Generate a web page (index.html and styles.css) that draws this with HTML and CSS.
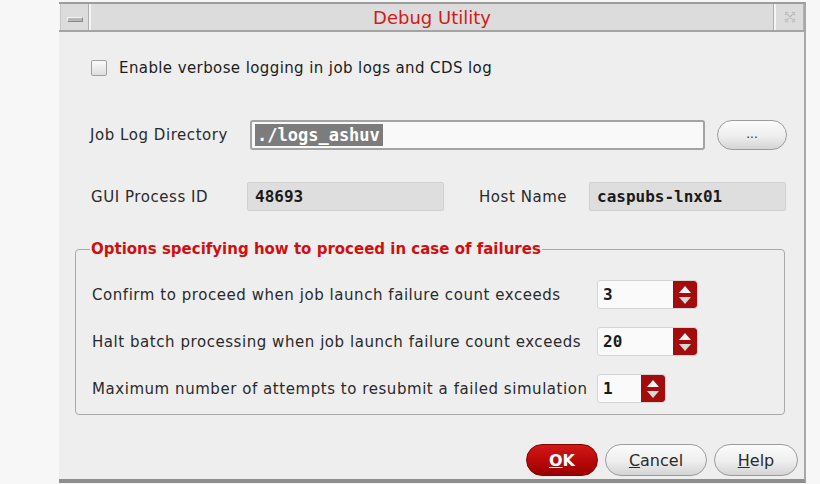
FILE: index.html
```html
<!DOCTYPE html>
<html>
<head>
<meta charset="utf-8">
<link rel="stylesheet" href="styles.css">
</head>
<body>
<div class="window">
  <div class="titlebar">
    <div class="tb-btn tb-min"><span class="min-bar"></span></div>
    <div class="tb-title">Debug Utility</div>
    <div class="tb-btn tb-close">
      <svg width="16" height="16" viewBox="0 0 16 16"><path d="M3 3 L6 6 M6 3 L3 6 M10 3 L13 6 M13 3 L10 6 M3 10 L6 13 M6 10 L3 13 M10 10 L13 13 M13 10 L10 13 M6 6 L10 10 M10 6 L6 10" stroke="#bcbcbc" stroke-width="1.2" fill="none"/></svg>
    </div>
  </div>
  <div class="content">
    <label class="check-row"><span class="checkbox"></span><span class="lbl chk-lbl">Enable verbose logging in job logs and CDS log</span></label>

    <div class="dir-row">
      <span class="lbl dir-lbl">Job Log Directory</span>
      <div class="input dir-input"><span class="sel">./logs_ashuv</span></div>
      <div class="pill browse">...</div>
    </div>

    <div class="info-row">
      <span class="lbl pid-lbl">GUI Process ID</span>
      <div class="ro-field pid">48693</div>
      <span class="lbl host-lbl">Host Name</span>
      <div class="ro-field host">caspubs-lnx01</div>
    </div>

    <fieldset class="group">
      <legend>Options specifying how to proceed in case of failures</legend>
      <div class="opt-row">
        <span class="lbl opt-lbl">Confirm to proceed when job launch failure count exceeds</span>
        <div class="spin"><span class="spin-val">3</span><span class="spin-btn"><i class="up"></i><i class="dn"></i></span></div>
      </div>
      <div class="opt-row">
        <span class="lbl opt-lbl">Halt batch processing when job launch failure count exceeds</span>
        <div class="spin"><span class="spin-val">20</span><span class="spin-btn"><i class="up"></i><i class="dn"></i></span></div>
      </div>
      <div class="opt-row">
        <span class="lbl opt-lbl short">Maximum number of attempts to resubmit a failed simulation</span>
        <div class="spin small"><span class="spin-val">1</span><span class="spin-btn"><i class="up"></i><i class="dn"></i></span></div>
      </div>
    </fieldset>

    <div class="buttons">
      <div class="pill ok"><u>O</u>K</div>
      <div class="pill cancel"><u>C</u>ancel</div>
      <div class="pill help"><u>H</u>elp</div>
    </div>
  </div>
</div>
</body>
</html>
```

FILE: styles.css
```css
html, body {
  margin: 0;
  padding: 0;
  background: #f7f7f7;
  font-family: "DejaVu Sans", sans-serif;
}

.window {
  margin: 2px 0 0 59px;
  width: 745px;
  height: 475px;
  background: #eeeeee;
  border-top: 2px solid #9c9c9c;
  border-right: 2px solid #a8a8a8;
  border-bottom: 4px solid #8e8e8e;
  display: flex;
  flex-direction: column;
}

.titlebar {
  height: 26px;
  display: flex;
  gap: 2px;
  background: #f4f4f4;
  border-bottom: 2px solid #a4a4a4;
}

.tb-btn {
  width: 27px;
  background: #dcdcdc;
  display: flex;
  align-items: center;
  justify-content: center;
  border-right: 1px solid #b0b0b0;
}

.tb-min {
  margin-left: 1px;
  border-left: 1px solid #c8c8c8;
}

.min-bar {
  width: 14px;
  height: 3px;
  background: #b8b8b8;
  border: 1px solid #8a8a8a;
  border-top-color: #f4f4f4;
  border-left-color: #f4f4f4;
  margin-top: 4px;
}

.tb-title {
  flex: 1;
  background: #dcdcdc;
  color: #d21a1a;
  font-family: "DejaVu Sans", sans-serif;
  font-size: 18px;
  text-align: center;
  line-height: 28px;
  border-right: 1px solid #b0b0b0;
}

.tb-close {
  width: 27px;
}

.content {
  flex: 1;
  padding: 27px 0 0 32px;
  display: flex;
  flex-direction: column;
  color: #222;
  font-size: 15px;
}

.check-row {
  display: flex;
  align-items: center;
  height: 18px;
  gap: 12px;
  color: #1c1c1c;
}

.checkbox {
  width: 14px;
  height: 14px;
  border: 1px solid #a0a0a0;
  border-radius: 2px;
  background: linear-gradient(#fafafa, #dedede);
}

.lbl {
  color: #2a2a2a;
  white-space: nowrap;
  letter-spacing: 0.55px;
}

.chk-lbl {
  color: #1c1c1c;
  letter-spacing: 0.4px;
}

.dir-row {
  margin-top: 43px;
  height: 30px;
  display: flex;
  align-items: center;
}

.dir-lbl {
  width: 160px;
  margin-left: -1px;
}

.input {
  height: 26px;
  background: #f9f9f9;
  border: 2px solid #a3a3a3;
  border-radius: 3px;
  box-sizing: content-box;
}

.dir-input {
  width: 448px;
  display: flex;
  align-items: center;
  padding-left: 3px;
}

.sel {
  background: #7c7c7c;
  color: #ffffff;
  font-family: "DejaVu Sans Mono", monospace;
  font-weight: bold;
  font-size: 17px;
  line-height: 22px;
  padding: 0 3px 0 2px;
}

.pill {
  display: flex;
  align-items: center;
  justify-content: center;
  border: 1px solid #9c9c9c;
  border-radius: 15px;
  background: linear-gradient(#fbfbfb 0%, #eeeeee 55%, #d4d4d4 100%);
  box-sizing: border-box;
  font-size: 16px;
  color: #2a2a2a;
}

.browse {
  margin-left: 12px;
  width: 70px;
  height: 30px;
  font-size: 12px;
  padding-bottom: 2px;
}

.info-row {
  margin-top: 32px;
  height: 29px;
  display: flex;
  align-items: center;
}

.pid-lbl { width: 156px; }
.host-lbl { width: 110px; margin-left: 35px; }

.ro-field {
  height: 29px;
  width: 197px;
  box-sizing: border-box;
  background: #dedede;
  border: 1px solid #d0d0d0;
  border-radius: 2px;
  font-family: "DejaVu Sans Mono", monospace;
  font-weight: bold;
  font-size: 16px;
  line-height: 27px;
  padding-left: 7px;
  color: #1a1a1a;
}

.group {
  margin: 29px 0 0 -16px;
  width: 710px;
  height: 175px;
  box-sizing: border-box;
  border: 1px solid #aaaaaa;
  border-radius: 4px;
  padding: 22px 0 0 16px;
  display: flex;
  flex-direction: column;
  gap: 18px;
}

.group legend {
  color: #d01010;
  font-weight: bold;
  font-size: 15px;
  padding: 0 1px;
  margin-left: -2px;
  line-height: 18px;
}

.opt-row {
  display: flex;
  align-items: center;
  height: 29px;
}

.opt-lbl { width: 505px; }

.spin {
  display: flex;
  height: 29px;
  width: 101px;
  box-sizing: border-box;
  background: #fafafa;
  border: 1px solid #d4d4d4;
  border-radius: 3px;
  overflow: hidden;
}

.spin.small { width: 69px; }

.spin-val {
  flex: 1;
  font-family: "DejaVu Sans Mono", monospace;
  font-weight: bold;
  font-size: 16px;
  line-height: 27px;
  padding-left: 5px;
  color: #1a1a1a;
}

.spin-btn {
  width: 24px;
  background: #a30c0c;
  border-radius: 0 3px 3px 0;
  display: flex;
  flex-direction: column;
  align-items: center;
  justify-content: center;
  gap: 4px;
}

.spin-btn i {
  display: block;
  width: 0;
  height: 0;
  border-left: 6px solid transparent;
  border-right: 6px solid transparent;
}

.spin-btn .up { border-bottom: 7px solid #f4f4f4; }
.spin-btn .dn { border-top: 7px solid #d8d8d8; }

.buttons {
  margin-top: 29px;
  margin-right: 6px;
  display: flex;
  justify-content: flex-end;
  gap: 7px;
}

.buttons .pill {
  height: 32px;
  border-radius: 16px;
}

.ok {
  width: 72px;
  background: linear-gradient(#d01818 0%, #b80808 55%, #980000 100%);
  border-color: #8a0000;
  color: #ffffff;
  font-weight: bold;
}

.cancel { width: 102px; }
.help { width: 84px; }
```
